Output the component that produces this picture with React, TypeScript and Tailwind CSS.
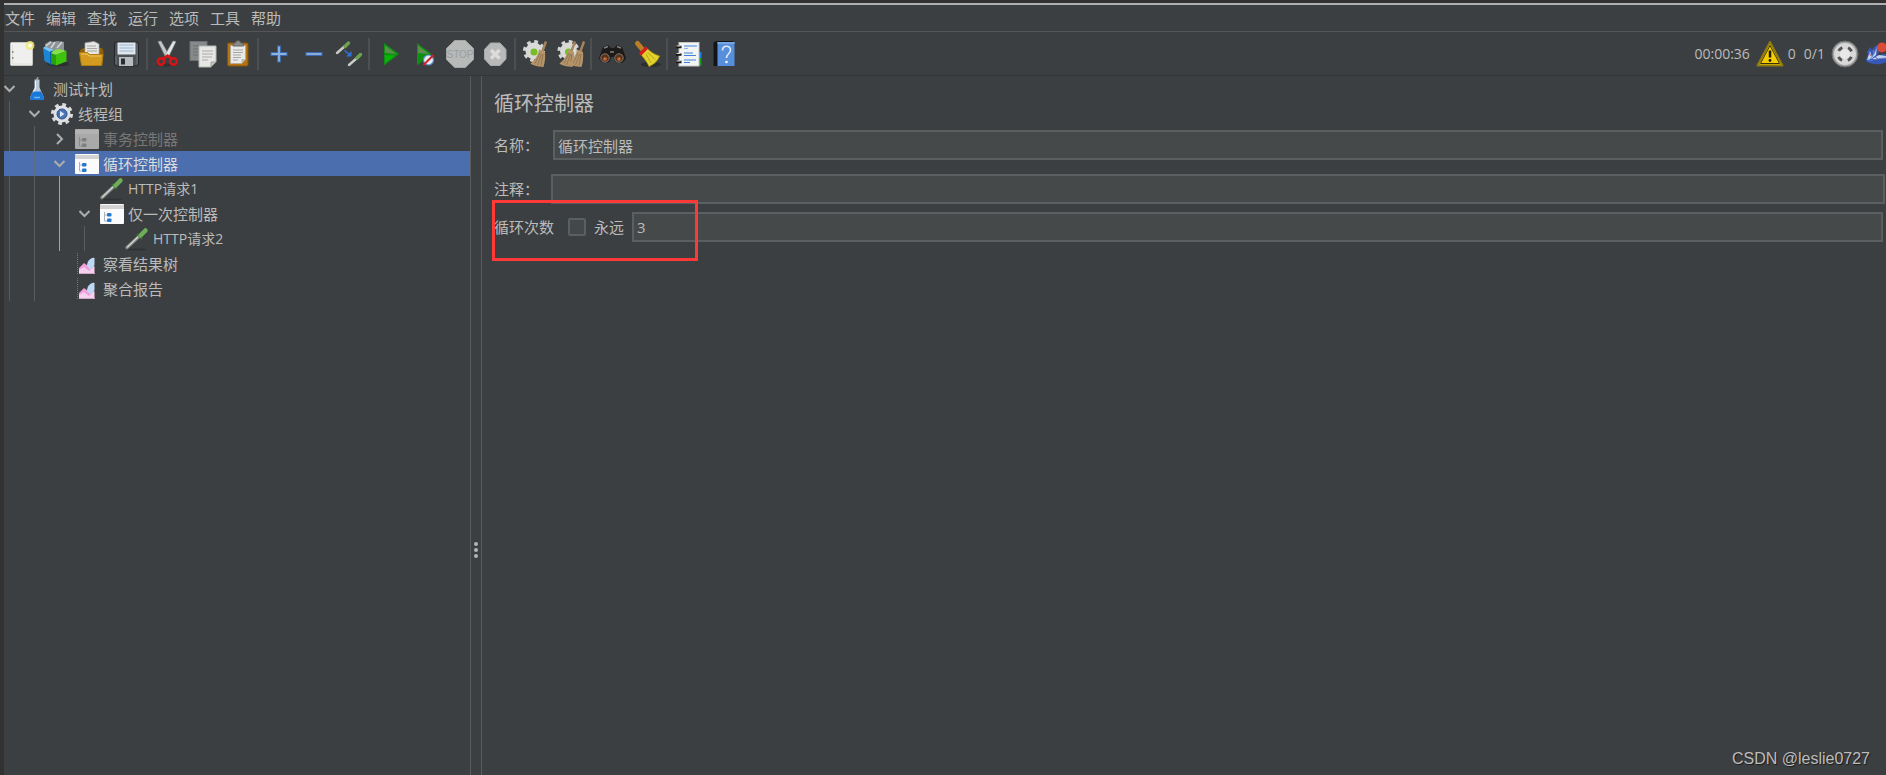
import { useState } from "react";
import type { ReactNode } from "react";

const MENUS = ["文件", "编辑", "查找", "运行", "选项", "工具", "帮助"];

function Icon({ children }: { children: ReactNode }) {
  return (
    <svg className="w-7 h-7 shrink-0 overflow-visible" viewBox="0 0 28 28" fill="none" aria-hidden="true">
      {children}
    </svg>
  );
}

function NewIcon() {
  return (
    <Icon>
      <rect x="2.5" y="2.5" width="22" height="23" rx="1" fill="#efefee" stroke="#c4c4c0" />
      <path d="M4.5 4.5v19.500h18.500" stroke="#dededc" />
      <path d="M4 12h1.500M4 18h1.500" stroke="#77776f" strokeWidth="1.500" />
      <circle cx="22" cy="5.500" r="4.500" fill="#efe67a" opacity=".85" />
      <circle cx="22" cy="5.500" r="2" fill="#fffde0" />
    </Icon>
  );
}

function TemplatesIcon() {
  return (
    <Icon>
      <ellipse cx="15" cy="24" rx="11" ry="2.500" fill="#2c2e30" />
      <path d="M2 4l5-3 4 1 3-1 7 1v9l-8 3L2 9z" fill="#8d9397" />
      <path d="M3 6l5-4M8 8l4-6M14 8l5-6" stroke="#d4d7d9" strokeWidth="1.500" />
      <path d="M0 8l7 3v13l-5.500-3z" fill="#1b86d4" />
      <path d="M0 8l2-1.500 9 3.500-4 2z" fill="#7cc4f5" />
      <path d="M7 11.500l5-1.500v14l-5 1z" fill="#0c5ea8" />
      <path d="M8 13l5 2v10.500l-5-2z" fill="#2aa10a" />
      <path d="M8 13c3-4 7-5 15.500-2L13 15z" fill="#86e048" />
      <path d="M13 15l10.500-4v10.500L13 25.500z" fill="#3ec40f" />
    </Icon>
  );
}

function OpenIcon() {
  return (
    <Icon>
      <path d="M2 10l4-2h18l1.500 3-1 14H4z" fill="#8e6308" />
      <path d="M7 3l9-1.500 5 2.500v12H7z" fill="#e6e6e4" stroke="#aaa" strokeWidth=".7" />
      <path d="M9 6h9M9 8.500h10M9 11h10" stroke="#a6a8a6" />
      <path d="M1.500 12.500h8l2 2h13.500l-1.500 11H3.500z" fill="#d39c20" stroke="#b27d0e" />
      <path d="M3 14h6l2 2h12" stroke="#eec364" />
    </Icon>
  );
}

function SaveIcon() {
  return (
    <Icon>
      <rect x="1.500" y="2" width="24" height="24" rx="2" fill="#4b5154" stroke="#25282a" />
      <rect x="4.500" y="2.500" width="18" height="12" fill="#dfe6ed" />
      <path d="M6.500 5h14M6.500 8h14M6.500 11h14" stroke="#9ab6d6" strokeWidth="1.200" />
      <rect x="6" y="17" width="14" height="9" fill="#b9bcbe" />
      <rect x="8" y="18.500" width="4" height="6" fill="#2b2e30" />
      <path d="M3 16v8M24 4v20" stroke="#6c7276" />
    </Icon>
  );
}

function CutIcon() {
  return (
    <Icon>
      <ellipse cx="13" cy="25" rx="11" ry="1.500" fill="#2f3133" />
      <path d="M4 1.500l3-.5 8 14-3.500 2z" fill="#c6c9ca" stroke="#8a8d8e" strokeWidth=".6" />
      <path d="M22 1.500l-3-.5-8 14 3.500 2z" fill="#e4e6e6" stroke="#8a8d8e" strokeWidth=".6" />
      <ellipse cx="7" cy="21.500" rx="3.200" ry="3.200" stroke="#d81414" strokeWidth="2.500" />
      <ellipse cx="19.500" cy="21.500" rx="3.200" ry="3.200" stroke="#d81414" strokeWidth="2.500" />
      <path d="M9 19l4.500-3.500L18 19" stroke="#d81414" strokeWidth="2.500" />
    </Icon>
  );
}

function CopyIcon() {
  return (
    <Icon>
      <rect x="1" y="1.500" width="17" height="19" fill="#868a8c" stroke="#6c7072" />
      <path d="M4 6h11M4 9h11M4 12h6M4 15h6" stroke="#6d7173" />
      <path d="M10 6h17v16l-5 5H10z" fill="#e6e6e4" stroke="#b6b8b6" />
      <path d="M13 11h11M13 14h11M13 17h10M13 20h6" stroke="#abada9" />
      <path d="M27 22h-5v5z" fill="#c4c6c2" stroke="#8c8e8a" strokeWidth=".7" />
    </Icon>
  );
}

function PasteIcon() {
  return (
    <Icon>
      <rect x="3.500" y="3" width="20.500" height="23" rx="1.500" fill="#b47414" stroke="#85540a" />
      <path d="M6.500 5.500h15v14l-4 4h-11z" fill="#e9e9e7" stroke="#a9a9a3" strokeWidth=".7" />
      <path d="M9 10h10M9 12.500h10M9 15h8M9 17.500h8M9 20h5" stroke="#a5a7a3" />
      <path d="M21.500 19h-4v5z" fill="#babcb7" />
      <path d="M9 6V3.500l2.500-.5c0-3 5-3 5 0l3 .5V6z" fill="#888b87" stroke="#656762" />
    </Icon>
  );
}

function PlusIcon() {
  return (
    <Icon>
      <path d="M14 5.500v17M5.500 14h17" stroke="#3b69b0" strokeWidth="4" />
      <path d="M14 6.500v15M6.500 14h15" stroke="#8fb3de" strokeWidth="1.800" />
    </Icon>
  );
}

function MinusIcon() {
  return (
    <Icon>
      <path d="M5.500 14h17" stroke="#3b69b0" strokeWidth="4" />
      <path d="M6.500 14h15" stroke="#8fb3de" strokeWidth="1.800" />
    </Icon>
  );
}

function ToggleIcon() {
  return (
    <Icon>
      <path d="M2 13l8-7" stroke="#c9cbc9" strokeWidth="2.400" strokeLinecap="round" />
      <path d="M10 6.500l3.500-3.500" stroke="#6da34e" strokeWidth="3.400" strokeLinecap="round" />
      <path d="M14 25l8-7" stroke="#c9cbc9" strokeWidth="2.400" strokeLinecap="round" />
      <path d="M22 18l3.500-3.500" stroke="#6da34e" strokeWidth="3.400" strokeLinecap="round" />
      <path d="M9.500 10.500l5 4" stroke="#2e76d8" strokeWidth="1.500" />
      <path d="M16.500 11v5.500H11z" fill="#2e76d8" />
    </Icon>
  );
}

function PlayIcon() {
  return (
    <Icon>
      <path d="M8 3l15 11L8 25.500z" fill="#0f8f12" />
      <path d="M9 5.500L20.500 14 9 13z" fill="#5a8f4c" />
      <path d="M9 15l10 .5L9 23.500z" fill="#08b408" />
    </Icon>
  );
}

function PlayNoTimersIcon() {
  return (
    <Icon>
      <path d="M6 3l14.500 11L6 25.500z" fill="#0f8f12" />
      <path d="M7 5.500L18 14 7 13z" fill="#5a8f4c" />
      <circle cx="17.500" cy="20" r="5" fill="#e3ebf6" stroke="#5d87bf" strokeWidth="1.200" />
      <path d="M12.500 25l10-10" stroke="#d42020" strokeWidth="2" />
    </Icon>
  );
}

function StopIcon() {
  return (
    <Icon>
      <path d="M8.700 .5h10.600L27.500 8.500v11L19.300 27.500H8.700L.5 19.500v-11z" fill="#b8b9b9" stroke="#a4a5a5" />
      <text x="14" y="18" textAnchor="middle" fontSize="10" fontFamily="Liberation Sans" fill="#9c9e9e">STOP</text>
    </Icon>
  );
}

function ShutdownIcon() {
  return (
    <Icon>
      <path d="M9.500 3h9.500l6 6.500V19l-6 6.500H9.500L3.500 19V9.500z" fill="#b8b9b9" stroke="#a8a9a9" />
      <path d="M10 10l8.500 8.500M18.500 10L10 18.500" stroke="#dcdcdc" strokeWidth="3.500" />
    </Icon>
  );
}

function Gear({ cx, cy }: { cx: number; cy: number }) {
  return (
    <g>
      <circle cx={cx} cy={cy} r="9.500" stroke="#d6d7d5" strokeWidth="3" strokeDasharray="3.730 3.730" />
      <circle cx={cx} cy={cy} r="8.500" fill="#d9dad8" />
      <circle cx={cx} cy={cy + 1} r="3.500" fill="#75bd25" />
    </g>
  );
}

function Broom({ x }: { x: number }) {
  return (
    <g>
      <path d={`M${x + 12} 1.500l-4 11`} stroke="#a8845c" strokeWidth="2.400" />
      <path d={`M${x + 5} 9.500l6 2.500c.5 5 0 10-1.500 15-6-.5-11-1.500-13-3.500 5-4 7.500-8 8.500-14z`} fill="#b5946a" />
      <path d={`M${x + 6} 13l-5 10.500M${x + 7.5} 14L${x + 3.5} 25M${x + 9} 14l-2 11.500`} stroke="#8d6f4a" strokeWidth=".8" />
    </g>
  );
}

function ClearIcon() {
  return (
    <Icon>
      <Gear cx={12} cy={11} />
      <Broom x={12} />
    </Icon>
  );
}

function ClearAllIcon() {
  return (
    <Icon>
      <Gear cx={11.5} cy={11} />
      <Broom x={6} />
      <Broom x={15} />
    </Icon>
  );
}

function SearchIcon() {
  return (
    <Icon>
      <path d="M5 7l5-2 3 3h3l3-3 5 2 4 11c-2 6-8 6-11 3l-1-4h-3l-1 4c-3 3-9 3-11-3z" fill="#1d1b1a" />
      <path d="M6 8l4-1.500M19 6.500L23 8M12 12h4" stroke="#85807b" strokeWidth="1.500" />
      <circle cx="7" cy="18" r="4.200" fill="#5d3019" stroke="#7b7774" />
      <circle cx="21" cy="18" r="4.200" fill="#5d3019" stroke="#7b7774" />
      <circle cx="7" cy="19" r="1.800" fill="#c06e34" />
      <circle cx="21" cy="19" r="1.800" fill="#c06e34" />
    </Icon>
  );
}

function SweepIcon() {
  return (
    <Icon>
      <ellipse cx="18" cy="24.500" rx="10" ry="2.500" fill="#2b2d2e" />
      <path d="M4.500 3.500l5 6" stroke="#bd7f24" strokeWidth="5" strokeLinecap="round" />
      <path d="M14 8.500c4 3.500 7 6 12.500 7.500-2 5-5 8-10.500 10.500-2-5-5-8-8-12z" fill="#e4d22c" stroke="#b39a0c" strokeWidth=".8" />
      <path d="M13 14l5 9M15 12.500l7 7" stroke="#b8a41c" />
      <path d="M7 14.500l7-7" stroke="#d3201c" strokeWidth="3.200" />
    </Icon>
  );
}

function FunctionIcon() {
  return (
    <Icon>
      <path d="M24 12h3.500v6H24z" fill="#1f7be8" />
      <path d="M24 18h3.500v7.500H24z" fill="#179a1c" />
      <rect x="5" y="2.500" width="20" height="23.500" fill="#f3f4f4" stroke="#c5c6c6" />
      <path d="M10 6h13M10 13h9M10 15.500h12M10 20h12M10 22.500h6" stroke="#3f84dc" strokeWidth="1.200" />
      <path d="M10 8.500h4" stroke="#8eb4e8" strokeWidth="1.200" />
      <path d="M2 7h5.500M2 14.500h5.500M2 22h5.500" stroke="#141414" strokeWidth="2.600" />
      <path d="M2.500 6h4M2.500 13.500h4M2.500 21h4" stroke="#d6d6d6" />
    </Icon>
  );
}

function HelpIcon() {
  return (
    <Icon>
      <path d="M4.500 2.500l3-1.500h17v25h-20z" fill="#121416" />
      <path d="M8.500 2h17v24h-17z" fill="#568fdb" />
      <path d="M8.500 2h17v2h-17z" fill="#78a7e4" />
      <path d="M13.500 10.500c0-5.500 8-5.500 8-.5 0 4-4 3.500-4 8" stroke="#dfe9f7" strokeWidth="1.600" />
      <circle cx="17.500" cy="22" r="1.300" fill="#f1f5fb" />
    </Icon>
  );
}

const TOOL_GROUPS = [
  [
    { label: "新建", icon: <NewIcon /> },
    { label: "模板", icon: <TemplatesIcon /> },
    { label: "打开", icon: <OpenIcon /> },
    { label: "保存", icon: <SaveIcon /> },
  ],
  [
    { label: "剪切", icon: <CutIcon /> },
    { label: "复制", icon: <CopyIcon /> },
    { label: "粘贴", icon: <PasteIcon /> },
  ],
  [
    { label: "全部展开", icon: <PlusIcon /> },
    { label: "全部折叠", icon: <MinusIcon /> },
    { label: "切换", icon: <ToggleIcon /> },
  ],
  [
    { label: "启动", icon: <PlayIcon /> },
    { label: "不停顿开始", icon: <PlayNoTimersIcon /> },
    { label: "停止", icon: <StopIcon /> },
    { label: "关闭", icon: <ShutdownIcon /> },
  ],
  [
    { label: "清除", icon: <ClearIcon /> },
    { label: "清除全部", icon: <ClearAllIcon /> },
  ],
  [
    { label: "查找", icon: <SearchIcon /> },
    { label: "重置搜索", icon: <SweepIcon /> },
  ],
  [
    { label: "函数助手", icon: <FunctionIcon /> },
    { label: "帮助", icon: <HelpIcon /> },
  ],
];

function TreeSvg({ children }: { children: ReactNode }) {
  return (
    <svg className="w-6 h-6 shrink-0" viewBox="0 0 24 24" fill="none" aria-hidden="true">
      {children}
    </svg>
  );
}

function FlaskIcon() {
  return (
    <TreeSvg>
      <path d="M11.500 3l1.500-3" stroke="#9aa0a4" strokeWidth="1.500" />
      <path d="M9.500 2.500h5v8l4.500 10c0 2-1 2.500-2 2.500H7c-1 0-2-.5-2-2.500l4.500-10z" fill="#b9c8d6" />
      <path d="M8 14.500h8l3 6c0 2-1 2.500-2 2.500H7c-1 0-2-.5-2-2.500z" fill="#1878dc" />
      <path d="M10.500 4v7l-2 4" stroke="#f4f8fb" />
      <path d="M9 20.500h6" stroke="#69b4f8" strokeWidth="1.500" />
    </TreeSvg>
  );
}

function ThreadGroupIcon() {
  return (
    <TreeSvg>
      <circle cx="12" cy="12" r="9.500" stroke="#d9dcdf" strokeWidth="3" strokeDasharray="3.730 3.730" />
      <circle cx="12" cy="12" r="8.500" fill="#dfe2e5" />
      <circle cx="12" cy="12" r="5" fill="#4a74b4" stroke="#2d4f86" />
      <path d="M10 9l4.500 3-4.500 3z" fill="#dbe8fa" />
    </TreeSvg>
  );
}

function ControllerIcon({ disabled }: { disabled?: boolean }) {
  return (
    <TreeSvg>
      <rect x="0" y="2" width="24" height="20" rx="1" fill={disabled ? "#a9a9a9" : "#fbfbfb"} />
      <path d="M0 3h24v4H0z" fill={disabled ? "#b3b3b3" : "#d3d3d3"} />
      <path d="M4.500 10v9h3M4.500 13h3" stroke={disabled ? "#8b8b8b" : "#a8b4be"} />
      <rect x="7" y="11" width="4.500" height="3.500" rx="1" fill={disabled ? "#7f7f7f" : "#2478cf"} />
      <rect x="7" y="16.500" width="4.500" height="3.500" rx="1" fill={disabled ? "#7f7f7f" : "#2478cf"} />
    </TreeSvg>
  );
}

function SamplerIcon() {
  return (
    <TreeSvg>
      <ellipse cx="12" cy="22.500" rx="10" ry="1" fill="#303335" />
      <path d="M2 20.500L14 9.500" stroke="#7f8380" strokeWidth="3.600" strokeLinecap="round" />
      <path d="M2.500 20L13.500 9.500" stroke="#d0d4d0" strokeWidth="1.500" strokeLinecap="round" />
      <path d="M12 7l5 5" stroke="#3a6a32" strokeWidth="2" />
      <path d="M15.500 8.500l5-5" stroke="#6fae58" strokeWidth="4.500" strokeLinecap="round" />
    </TreeSvg>
  );
}

function ListenerIcon() {
  return (
    <TreeSvg>
      <path d="M2.500 1v21" stroke="#73777a" strokeDasharray="1 1" />
      <path d="M4 21v-5l5-5 4 3 6-5v12z" fill="#ef9fdb" />
      <path d="M12 14c0-5 4-9 7.500-8v7l-4 4.500z" fill="#bcd8f5" />
      <path d="M4 18l5-3 5 4 5.500-5v7H4z" fill="#f6d0ee" />
      <path d="M4 21.500h16" stroke="#cfa9c8" />
    </TreeSvg>
  );
}

interface TreeItem {
  id: string;
  title: string;
  depth: number;
  icon: ReactNode;
  state?: "open" | "closed";
  disabled?: boolean;
  latin?: boolean;
}

const TREE: TreeItem[] = [
  { id: "plan", title: "测试计划", depth: 0, icon: <FlaskIcon />, state: "open" },
  { id: "group", title: "线程组", depth: 1, icon: <ThreadGroupIcon />, state: "open" },
  { id: "transaction", title: "事务控制器", depth: 2, icon: <ControllerIcon disabled />, state: "closed", disabled: true },
  { id: "loop", title: "循环控制器", depth: 2, icon: <ControllerIcon />, state: "open" },
  { id: "http1", title: "HTTP请求1", depth: 3, icon: <SamplerIcon />, latin: true },
  { id: "once", title: "仅一次控制器", depth: 3, icon: <ControllerIcon />, state: "open" },
  { id: "http2", title: "HTTP请求2", depth: 4, icon: <SamplerIcon />, latin: true },
  { id: "results", title: "察看结果树", depth: 2, icon: <ListenerIcon /> },
  { id: "report", title: "聚合报告", depth: 2, icon: <ListenerIcon /> },
];

function TreeRow({ item, selected, onSelect }: { item: TreeItem; selected: boolean; onSelect: () => void }) {
  const guides = Array.from({ length: item.depth }, (_, i) => i);

  return (
    <li className={`flex h-[25px] ${selected ? "bg-[#4b6eaf]" : ""}`}>
      {guides.map((i) => (
        <span key={i} className="w-[25px] shrink-0 pl-[5px]">
          <span
            className={`block h-full ${
              i === 2 ? "w-px bg-[#6cb0ea]" : selected ? "w-px bg-[#5c6a85]" : "w-px bg-[#595c5e]"
            }`}
          />
        </span>
      ))}
      <button
        onClick={onSelect}
        className={`flex flex-1 items-center text-left whitespace-nowrap ${
          item.disabled ? "text-[#777777]" : selected ? "text-[#dcdcdc]" : "text-[#bbbbbb]"
        }`}
      >
        <svg className="w-3 h-3 mr-[9px] shrink-0" viewBox="0 0 12 12" fill="none" stroke="#adadad" strokeWidth="2" aria-hidden="true">
          {item.state === "open" && <path d="M.5 3l5 5 5-5" />}
          {item.state === "closed" && <path d="M3 1l5 5-5 5" />}
        </svg>
        {item.icon}
        <span className={`ml-1 leading-6 ${item.latin ? "text-sm" : "text-[15px]"}`}>{item.title}</span>
      </button>
    </li>
  );
}

function StatusBar() {
  return (
    <div className="ml-auto flex items-center text-sm">
      <span>00:00:36</span>
      <button aria-label="日志" className="ml-[6px] flex items-center">
        <Icon>
          <path d="M14 2L26.500 25.500h-25z" fill="#f5cc00" stroke="#8f7a10" strokeWidth="2" strokeLinejoin="round" />
          <path d="M14 5.500L23.500 23.500h-19z" stroke="#3a340c" />
          <path d="M14 10.500v7" stroke="#1f1c04" strokeWidth="2.500" />
          <circle cx="14" cy="20.500" r="1.400" fill="#1f1c04" />
        </Icon>
        <span className="ml-1">0</span>
      </button>
      <span className="ml-2">0/1</span>
      <span className="ml-[6px]">
        <Icon>
          <circle cx="14" cy="14" r="13" fill="#a2a2a2" stroke="#6b6b6b" />
          <circle cx="14" cy="14" r="11" fill="#d8d8d8" />
          <circle cx="14" cy="14" r="5" fill="#e8e8e8" />
          <circle cx="14" cy="14" r="7" stroke="#555555" strokeWidth="3" strokeDasharray="5 6" strokeDashoffset="-3" />
        </Icon>
      </span>
      <svg className="ml-[6px] w-[21px] h-7 shrink-0" viewBox="0 0 21 28" fill="none" aria-hidden="true">
        <path d="M1 21c0-3 1-4 2-6l-1-3 3-5 2 3 3-4 3-1 1 6-2 7 5-4 4 0v8c-5 3-14 3.500-20-1z" fill="#3558b5" />
        <path d="M2 20l3-9 2 6 5-10-1 8-5 4zM7 19l7-4 7 1v2l-9 1z" fill="#c3d4f0" />
        <path d="M4 13l2 3M8 10l1 4M10 17l3 2" stroke="#b65a86" />
        <path d="M3 21c4-3 7-8 9-14M4 21c5-1 10-3 17-3" stroke="#5d7fcf" strokeWidth=".8" />
        <circle cx="17" cy="7.500" r="5" fill="#d94a38" />
      </svg>
    </div>
  );
}

const FIELD = "h-[30px] min-w-0 flex-1 border-2 border-[#5c5f60] bg-[#45494a] px-[3px] text-[15px] outline-none";

export default function App() {
  const [selected, setSelected] = useState("loop");
  const [name, setName] = useState("循环控制器");
  const [comment, setComment] = useState("");
  const [forever, setForever] = useState(false);
  const [loops, setLoops] = useState("3");

  return (
    <div className="relative flex min-h-screen flex-col overflow-hidden border-l-4 border-t-[3px] border-[#323232] bg-[#3c3f41] font-['Open_Sans','Noto_Sans_CJK_SC',sans-serif] text-[#bbbbbb]">
      <nav className="flex h-[29px] items-center gap-[11px] border-t-2 border-t-[#b0b0b0] border-b border-b-[#555555] pl-px text-[15px]">
        {MENUS.map((menu) => (
          <button key={menu} className="leading-6">{menu}</button>
        ))}
      </nav>

      <header className="flex h-11 items-center border-b border-[#323537]">
        {TOOL_GROUPS.map((group, i) => (
          <div key={i} className="flex items-center">
            {i > 0 && <span className="mx-[2px] h-8 w-[2px] bg-[#4d5052]" />}
            {group.map((tool) => (
              <button key={tool.label} aria-label={tool.label} className="flex w-[35px] justify-center">
                {tool.icon}
              </button>
            ))}
          </div>
        ))}
        <StatusBar />
      </header>

      <div className="flex flex-1">
        <aside className="w-1/4 max-w-[466px]">
          <ul>
            {TREE.map((item) => (
              <TreeRow key={item.id} item={item} selected={item.id === selected} onSelect={() => setSelected(item.id)} />
            ))}
          </ul>
        </aside>

        <div className="flex w-3 flex-col items-center border-x border-[#5a5c5c]">
          <span className="flex-15" />
          <span className="flex flex-col gap-[2px]">
            <span className="h-1 w-1 rounded-full bg-[#b4b4b4]" />
            <span className="h-1 w-1 rounded-full bg-[#b4b4b4]" />
            <span className="h-1 w-1 rounded-full bg-[#b4b4b4]" />
          </span>
          <span className="flex-7" />
        </div>

        <main className="min-w-0 flex-1 pl-3">
          <h1 className="mt-3 text-xl leading-8">循环控制器</h1>
          <div className="mt-[10px] flex items-center pr-[3px]">
            <label htmlFor="name" className="w-[59px] text-[15px]">名称：</label>
            <input id="name" className={FIELD} value={name} onChange={(e) => setName(e.target.value)} />
          </div>
          <div className="mt-[14px] flex items-center pr-px">
            <label htmlFor="comment" className="w-[57px] text-[15px]">注释：</label>
            <input id="comment" className={FIELD} value={comment} onChange={(e) => setComment(e.target.value)} />
          </div>
          <div className="relative mt-2 flex items-center pr-[3px]">
            <label htmlFor="loops" className="text-[15px]">循环次数</label>
            <input
              id="forever"
              type="checkbox"
              checked={forever}
              onChange={(e) => setForever(e.target.checked)}
              className="ml-[14px] h-[18px] w-[18px] appearance-none rounded-xs border-2 border-[#5c5f60] bg-[#43494a] checked:bg-[#4b6eaf]"
            />
            <label htmlFor="forever" className="mx-2 text-[15px]">永远</label>
            <input id="loops" className={FIELD} value={loops} onChange={(e) => setLoops(e.target.value)} />
            <div className="pointer-events-none absolute -left-[2px] -top-3 h-[61px] w-[206px] border-3 border-[#ff3838]" />
          </div>
        </main>
      </div>

      <p className="absolute bottom-1 right-4 font-['Liberation_Sans',sans-serif] text-base text-[#bcbcbc] [text-shadow:1px_1px_1px_#1c1c1c]">
        CSDN @leslie0727
      </p>
    </div>
  );
}
